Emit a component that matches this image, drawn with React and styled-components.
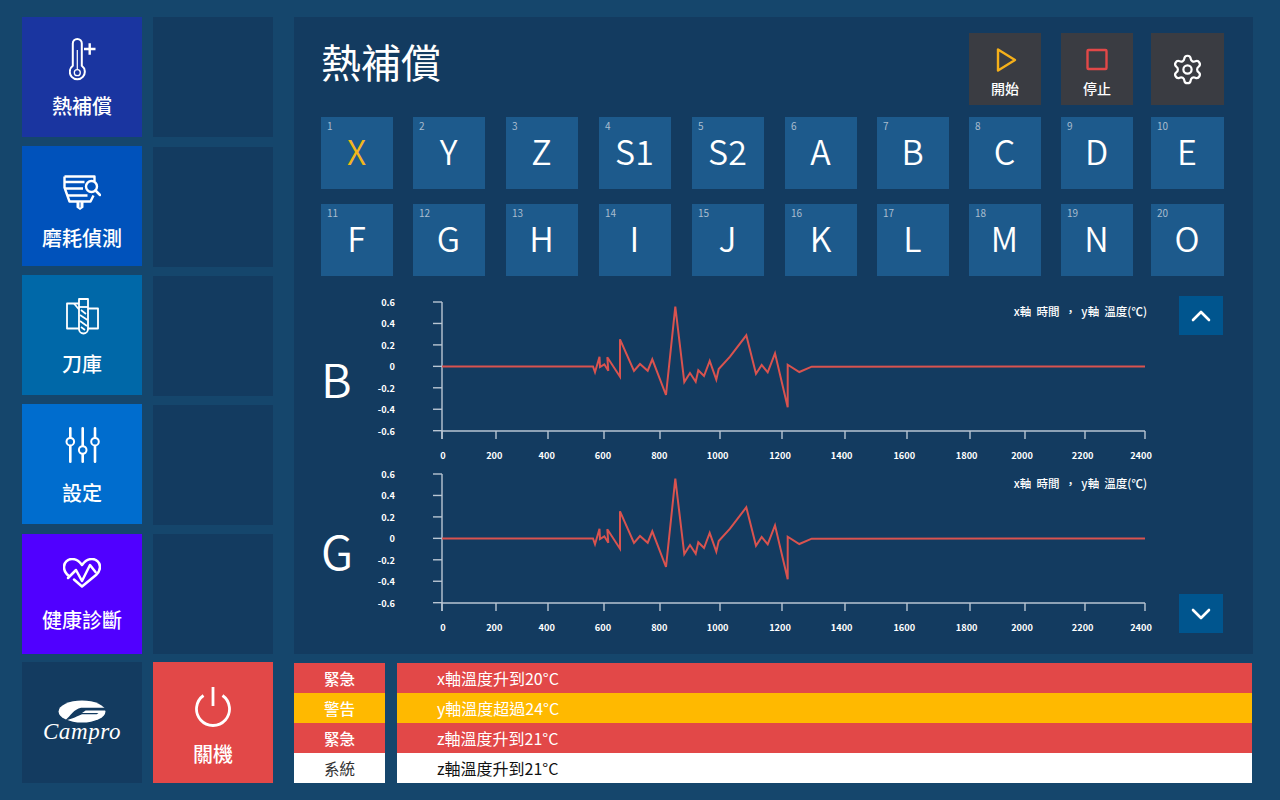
import React from 'react';
import styled, { createGlobalStyle } from 'styled-components';
import { Settings } from 'lucide-react';

const CJK = `"Noto Sans CJK TC", "Noto Sans", sans-serif`;

const GlobalStyle = createGlobalStyle`
  html, body {
    margin: 0;
    padding: 0;
    background: #15466c;
    font-family: ${CJK};
  }
`;

const Page = styled.div`
  width: 1280px;
  height: 800px;
  overflow: hidden;
  background: #15466c;
  padding: 17px 27px 17px 22px;
  box-sizing: border-box;
  display: grid;
  grid-template-columns: 120px 120px 959px;
  grid-template-rows: 637px 121px;
  column-gap: 11px;
  row-gap: 8px;
`;

const SideCol = styled.div`
  display: flex;
  flex-direction: column;
  gap: 9px;
`;

const NavTile = styled.div`
  width: 120px;
  height: 120px;
  flex: none;
  margin-top: ${(p) => p.$shift || 0}px;
  background: ${(p) => p.$bg};
  color: #fff;
  display: flex;
  flex-direction: column;
  align-items: center;
  box-sizing: border-box;
  padding-top: ${(p) => p.$top || 20}px;
`;

const NavIcon = styled.div`
  height: ${(p) => p.$h}px;
  display: flex;
  align-items: center;
  justify-content: center;
`;

const NavLabel = styled.div`
  font-size: 20px;
  font-weight: 500;
  line-height: 26px;
  margin-top: ${(p) => p.$mt || 0}px;
`;

const EmptyTile = styled.div`
  width: 120px;
  height: 120px;
  flex: none;
  margin-top: ${(p) => p.$shift || 0}px;
  background: #133b60;
`;

const LogoTile = styled(EmptyTile)`
  height: 121px;
  display: flex;
  flex-direction: column;
  align-items: center;
  justify-content: center;
  box-sizing: border-box;
`;

const LogoWord = styled.div`
  font-family: "Liberation Serif", serif;
  font-style: italic;
  color: #fff;
  font-size: 23px;
  line-height: 18px;
  letter-spacing: 0.6px;
  margin-top: 0;
`;

const PowerTile = styled(NavTile)`
  height: 121px;
  padding-top: 25px;
`;

const MainPanel = styled.div`
  margin-left: 10px;
  width: 959px;
  height: 637px;
  background: #133b60;
  box-sizing: border-box;
  padding: 16px 29px 0 27px;
  display: flex;
  flex-direction: column;
`;

const Header = styled.div`
  display: flex;
  justify-content: space-between;
  height: 72px;
`;

const Title = styled.h1`
  margin: -2px 0 0;
  color: #fff;
  font-size: 40px;
  font-weight: 400;
  line-height: 60px;
`;

const ActionGroup = styled.div`
  display: flex;
  gap: 20px;
`;

const ActionButton = styled.div`
  width: ${(p) => (p.$center ? 73 : 72)}px;
  margin-left: ${(p) => (p.$center ? -2 : 0)}px;
  height: 72px;
  background: #3a3c42;
  color: #fff;
  display: flex;
  flex-direction: column;
  align-items: center;
  justify-content: ${(p) => (p.$center ? 'center' : 'flex-start')};
  padding-top: ${(p) => (p.$center ? 0 : 14)}px;
  box-sizing: border-box;
`;

const ActionLabel = styled.div`
  font-size: 14px;
  font-weight: 500;
  line-height: 20px;
  margin-top: 5px;
`;

const AxisGrid = styled.div`
  display: grid;
  grid-template-columns: 92px 93px 93px 93px 93px 92px 92px 92px 90px 73px;
  row-gap: 15px;
  margin-top: 12px;
  width: 903px;
`;

const AxisTile = styled.div`
  width: ${(p) => (p.$wide ? 73 : 72)}px;
  height: 72px;
  position: relative;
  background: #1d5a8c;
  color: ${(p) => (p.$active ? '#f2b71c' : '#fff')};
  font-size: 34px;
  font-weight: 350;
  line-height: 67px;
  text-align: center;
  text-indent: -1px;
`;

const AxisIndex = styled.span`
  position: absolute;
  left: 6px;
  top: 3px;
  font-size: 10px;
  font-weight: 400;
  line-height: 12px;
  text-indent: 0;
  color: #a9bdcf;
`;

const ChartArea = styled.div`
  display: flex;
  margin-top: 20px;
  width: 903px;
`;

const ChartCol = styled.div`
  width: 858px;
  display: flex;
  flex-direction: column;
`;

const ChartRow = styled.div`
  height: 171.5px;
  display: flex;
`;

const ChartLetter = styled.div`
  width: 39px;
  font-size: 47px;
  font-weight: 350;
  line-height: 163px;
  color: #fff;
`;

const ChartTitle = styled.div`
  position: absolute;
  right: 13px;
  top: 6px;
  color: #fff;
  font-size: 11.5px;
  font-weight: 500;
  line-height: 18px;
  white-space: pre;
`;

const ChartBox = styled.div`
  position: relative;
  width: 800px;
  height: 171.5px;
`;

const ScrollCol = styled.div`
  flex: 1;
  display: flex;
  flex-direction: column;
  justify-content: space-between;
  align-items: flex-end;
  height: 337px;
  padding-right: 1px;
`;

const ScrollButton = styled.div`
  width: 44px;
  height: 39px;
  background: #00558e;
  display: flex;
  align-items: center;
  justify-content: center;
`;

const StatusArea = styled.div`
  margin-left: 10px;
  padding-top: 1px;
  display: grid;
  grid-template-columns: 91px 855px;
  column-gap: 12px;
  align-content: start;
  width: 958px;
`;

const StatusCell = styled.div`
  height: 30px;
  font-size: ${(p) => (p.$msg ? 16 : 15.5)}px;
  font-weight: ${(p) => (p.$bold ? 500 : 400)};
  line-height: 31px;
  box-sizing: border-box;
  background: ${(p) => p.$bg};
  color: ${(p) => p.$fg};
  text-align: ${(p) => (p.$msg ? 'left' : 'center')};
  padding-left: ${(p) => (p.$msg ? 40 : 0)}px;
`;

// tick x, label x (the labels sit slightly left of their ticks in the reference)
const XTICKS = [
  [442, 443, '0'], [496, 494.3, '200'], [548, 546.7, '400'], [604, 603, '600'], [660, 659.3, '800'],
  [720, 717.7, '1000'], [782, 780, '1200'], [845, 841.7, '1400'], [907, 904.3, '1600'],
  [970, 966.7, '1800'], [1025, 1022, '2000'], [1085, 1082.7, '2200'], [1145, 1141, '2400'],
];
const YTICKS = ['0.6', '0.4', '0.2', '0', '-0.2', '-0.4', '-0.6'];

// traced from the reference, page coordinates of the first chart
const POINTS = [
  [442, 366.5], [593, 366.5], [595, 372.3], [599.5, 356.7], [600, 367], [604.3, 364.3], [608.3, 370.7],
  [607.3, 357.3], [620, 376.7], [620, 339.3], [634, 371], [640, 364], [647.7, 370.7], [652.3, 359.3],
  [666, 395], [675.3, 306.7], [684.3, 382], [690, 373], [695.7, 381.7], [698.3, 370.3], [704, 376],
  [709.7, 361], [716.3, 379.7], [718.7, 369], [730, 356.7], [746.3, 335.3], [756, 373.7], [761.7, 365],
  [767.7, 372.3], [775, 353.3], [787.7, 407.3], [787.7, 364.7], [799.3, 372], [811.7, 366.7], [1145, 366.5],
];

const OX = 360;
const OY = 296;

const ChartSvg = () => (
  <svg width="800" height="172" viewBox="0 0 800 172" style={{ display: 'block' }}>
    <g stroke="#b9c6d3" strokeWidth="1.4" fill="none">
      <path d={`M${442 - OX} ${302 - OY}V${439 - OY}`} />
      <path d={`M${442 - OX} ${431 - OY}H${1145 - OX}`} />
      {YTICKS.map((t, i) => (
        <path key={t} d={`M${433 - OX} ${302 + i * 21.45 - OY}H${442 - OX}`} />
      ))}
      {XTICKS.map(([x, , t]) => (
        <path key={t} d={`M${x - OX} ${431 - OY}V${439 - OY}`} />
      ))}
    </g>
    <g fill="#fff" fontSize="9.2" fontWeight="700" fontFamily={CJK}>
      {YTICKS.map((t, i) => (
        <text key={t} x={395 - OX} y={306 + i * 21.45 - OY} textAnchor="end">{t}</text>
      ))}
      {XTICKS.map(([, lx, t]) => (
        <text key={t} x={lx - OX} y={459 - OY} textAnchor="middle">{t}</text>
      ))}
    </g>
    <polyline
      points={POINTS.map(([x, y]) => `${x - OX},${y - OY}`).join(' ')}
      fill="none"
      stroke="#d9534f"
      strokeWidth="2"
      strokeLinejoin="miter"
    />
  </svg>
);

const Chart = ({ letter }) => (
  <ChartRow>
    <ChartLetter>{letter}</ChartLetter>
    <ChartBox>
      <ChartSvg />
      <ChartTitle>{'x軸  時間  ，  y軸  溫度(℃)'}</ChartTitle>
    </ChartBox>
  </ChartRow>
);

const ThermoIcon = () => (
  <svg width="27" height="44" viewBox="69 38 27 44" fill="none" stroke="#fff">
    <path d="M72.8 43.500a4.500 4.500 0 0 1 9 0v22.300a7.500 7.500 0 1 1-9 0z" strokeWidth="2" />
    <circle cx="77.300" cy="72.700" r="3" strokeWidth="1.300" />
    <path d="M77.300 50v19.500" strokeWidth="1.200" />
    <path d="M84 49h11.500M89.700 43.300v11.500" strokeWidth="2.400" />
  </svg>
);

const WearIcon = () => (
  <svg width="38" height="35" viewBox="61.500 175.500 38 35" fill="none" stroke="#fff" strokeWidth="2.400" strokeLinejoin="round">
    <path d="M63 177h30v5" />
    <path d="M63 177v11l5 14h21l3-6" />
    <path d="M63 182.500h20M63.500 189h18M66 196h20" />
    <circle cx="90" cy="187" r="5.500" />
    <path d="M94 191l4.500 4.500" strokeLinecap="round" strokeWidth="2.500" />
    <path d="M75 202v6l3.500 2.500 3.500-2.500v-6z" fill="#fff" stroke="none" />
    <path d="M78.500 203v5" stroke="#0052bb" strokeWidth="1" />
  </svg>
);

const MagazineIcon = () => (
  <svg width="33" height="37" viewBox="65 298 33 37" fill="none" stroke="#fff" strokeWidth="1.800" strokeLinejoin="round">
    <path d="M78 303.500H66v25h12" />
    <path d="M73 303.500l5 6" />
    <path d="M87 308.500h10v20H87" />
    <path d="M78 299h9v30a4.500 4.500 0 0 1-9 0z" />
    <path d="M78 307h9" />
    <path d="M80 310l5 4M79 315l7.500 5M79 321l7 5M80 327l4 3" strokeWidth="1.700" />
  </svg>
);

const SlidersIcon = () => (
  <svg width="35" height="36" viewBox="64 427 35 36" fill="none" stroke="#fff" strokeWidth="2.600" strokeLinecap="round">
    <path d="M69.300 428.300v9M69.300 446v15.700" />
    <circle cx="69.300" cy="441.700" r="3.800" strokeWidth="2" />
    <path d="M81.700 428.300v17.500M81.700 454.500v7.200" />
    <circle cx="81.700" cy="450" r="3.800" strokeWidth="2" />
    <path d="M94 428.300v9M94 446v15.700" />
    <circle cx="94" cy="441.700" r="3.800" strokeWidth="2" />
  </svg>
);

const HeartIcon = () => (
  <svg width="38" height="30" viewBox="63 558 38 30" fill="none" stroke="#fff" strokeWidth="2.500" strokeLinejoin="round" strokeLinecap="round">
    <path d="M69 576c-4-3-5-6-5-9 0-4.500 3.500-8 8-8 4 0 7.500 2.500 10 6 2.500-3.500 6-6 10-6 4.500 0 8 3.500 8 8 0 3-1.500 5.500-4 8l-14 11.500-8-7" />
    <path d="M68 578l8-8 6 11 8-16 5.500 7" />
  </svg>
);

const PowerIcon = () => (
  <svg width="36" height="41" viewBox="195 687 36 41" fill="none" stroke="#fff" strokeWidth="2.800">
    <path d="M203.500 695.500a16.500 16.500 0 1 0 19 0" />
    <path d="M213 687v19" />
  </svg>
);

const PlayIcon = () => (
  <svg width="24" height="26" viewBox="0 0 24 26" fill="none" stroke="#f5b01a" strokeWidth="2.400" style={{ marginLeft: 1 }}>
    <path d="M4 2.500v21L21 13z" strokeLinejoin="round" />
  </svg>
);

const StopIcon = () => (
  <svg width="24" height="26" viewBox="0 0 24 26" fill="none" stroke="#e24848" strokeWidth="2.400" style={{ marginLeft: 0 }}>
    <rect x="2.500" y="3" width="19" height="19" rx="1" />
  </svg>
);

const LogoMark = () => (
  <svg width="52" height="23" viewBox="0 0 52 25" style={{ marginTop: -4 }}>
    <ellipse cx="26" cy="12.500" rx="25.500" ry="12" fill="#fff" />
    <path d="M8 22C14 17 17 10 25 8.500h26l1 3H30l-4 2.500h18l-2 1.500H26c-5 2-10 5-18 6.500z" fill="#133b60" />
  </svg>
);

const Chevron = ({ down }) => (
  <svg width="20" height="12" viewBox="0 0 20 12" fill="none" stroke="#fff" strokeWidth="2.600" strokeLinecap="round" strokeLinejoin="round">
    <path d={down ? 'M2 2l8 8 8-8' : 'M2 10l8-8 8 8'} />
  </svg>
);

const NAV = [
  { label: '熱補償', bg: '#1a35a0', icon: <ThermoIcon />, top: 21, h: 44, mt: 11 },
  { label: '磨耗偵測', bg: '#0052bb', icon: <WearIcon />, top: 29, h: 35, mt: 15 },
  { label: '刀庫', bg: '#0068a8', icon: <MagazineIcon />, top: 23, h: 37, mt: 16 },
  { label: '設定', bg: '#006dce', icon: <SlidersIcon />, top: 23, h: 36, mt: 17 },
  { label: '健康診斷', bg: '#5000ff', icon: <HeartIcon />, top: 24, h: 30, mt: 19, shift: 1 },
];

const AXES = ['X', 'Y', 'Z', 'S1', 'S2', 'A', 'B', 'C', 'D', 'E', 'F', 'G', 'H', 'I', 'J', 'K', 'L', 'M', 'N', 'O'];

const RED = '#e24848';
const AMBER = '#ffb900';
const STATUS = [
  { kind: '緊急', msg: 'x軸溫度升到20°C', bg: RED, fg: '#fff' },
  { kind: '警告', msg: 'y軸溫度超過24°C', bg: AMBER, fg: '#fff' },
  { kind: '緊急', msg: 'z軸溫度升到21°C', bg: RED, fg: '#fff' },
  { kind: '系統', msg: 'z軸溫度升到21°C', bg: '#fff', fg: '#333' },
];

export default function App() {
  return (
    <Page>
      <GlobalStyle />
      <SideCol>
        {NAV.map((n) => (
          <NavTile key={n.label} $bg={n.bg} $top={n.top} $shift={n.shift}>
            <NavIcon $h={n.h}>{n.icon}</NavIcon>
            <NavLabel $mt={n.mt}>{n.label}</NavLabel>
          </NavTile>
        ))}
      </SideCol>
      <SideCol>
        {NAV.map((n, i) => (
          <EmptyTile key={n.label} $shift={i === 1 ? 1 : 0} />
        ))}
      </SideCol>
      <MainPanel>
        <Header>
          <Title>熱補償</Title>
          <ActionGroup>
            <ActionButton>
              <PlayIcon />
              <ActionLabel>開始</ActionLabel>
            </ActionButton>
            <ActionButton>
              <StopIcon />
              <ActionLabel>停止</ActionLabel>
            </ActionButton>
            <ActionButton $center>
              <Settings size={33} color="#fff" strokeWidth={1.6} />
            </ActionButton>
          </ActionGroup>
        </Header>
        <AxisGrid>
          {AXES.map((a, i) => (
            <AxisTile key={a} $active={i === 0} $wide={i % 10 === 9}>
              <AxisIndex>{i + 1}</AxisIndex>
              {a}
            </AxisTile>
          ))}
        </AxisGrid>
        <ChartArea>
          <ChartCol>
            <Chart letter="B" />
            <Chart letter="G" />
          </ChartCol>
          <ScrollCol>
            <ScrollButton><Chevron /></ScrollButton>
            <ScrollButton><Chevron down /></ScrollButton>
          </ScrollCol>
        </ChartArea>
      </MainPanel>
      <LogoTile>
        <LogoMark />
        <LogoWord>Campro</LogoWord>
      </LogoTile>
      <PowerTile $bg={RED}>
        <NavIcon $h={41}><PowerIcon /></NavIcon>
        <NavLabel $mt={13}>關機</NavLabel>
      </PowerTile>
      <StatusArea>
        {STATUS.map((s, i) => (
          <React.Fragment key={i}>
            <StatusCell $bg={s.bg} $fg={s.fg} $bold={i < 3}>{s.kind}</StatusCell>
            <StatusCell $bg={s.bg} $fg={i === 3 ? '#111' : s.fg} $msg>{s.msg}</StatusCell>
          </React.Fragment>
        ))}
      </StatusArea>
    </Page>
  );
}
